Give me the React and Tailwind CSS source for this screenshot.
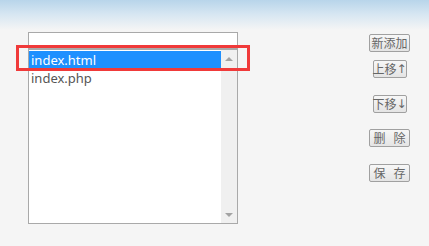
export default function App() {
  const btn = "h-[18px] border border-[#a0a0a0] rounded-[2px] bg-[linear-gradient(#f7f7f7,#e4e4e4)] leading-[16px] whitespace-pre p-0 flex items-center justify-center";
  return (
    <div className="relative w-[429px] h-[246px] overflow-hidden bg-[linear-gradient(to_bottom,#b8d5ea_0px,#d6e6f2_14px,#f5f5f5_30px)] font-['Noto_Sans','Noto_Sans_CJK_SC',sans-serif]">
      <div className="flex pt-[32px] pl-[28px]">
        <div className="w-[210px] h-[192px] border border-[#a9a9a9] bg-white flex flex-col">
          <div className="h-[17px] shrink-0 border-b-2 border-[#a9a9a9]"></div>
          <div className="flex flex-1">
            <div className="flex-1 pt-[1px]">
              <div className="h-[17px] bg-[#1e90ff] text-white text-[13px] leading-[18px] pl-[2px]">index.html</div>
              <div className="h-[18px] text-[#555] text-[13px] leading-[20px] pl-[2px]">index.php</div>
            </div>
            <div className="w-[16px] bg-[#f0f0f0] flex flex-col items-center justify-between pt-[7px] pb-[6px]">
              <div className="w-0 h-0 border-l-[4px] border-r-[4px] border-b-[4px] border-l-transparent border-r-transparent border-b-[#a3a3a3]"></div>
              <div className="w-0 h-0 border-l-[4px] border-r-[4px] border-t-[4px] border-l-transparent border-r-transparent border-t-[#a3a3a3]"></div>
            </div>
          </div>
        </div>
        <div className="ml-[131px] w-[41px] flex flex-col items-center pt-[2px] font-['Noto_Sans_CJK_SC',sans-serif] text-[12px] text-[#666]">
          <button className={btn + " w-[41px]"}>新添加</button>
          <button className={btn + " mt-[8px] w-[34px]"}>上移<span className="font-['DejaVu_Sans',sans-serif] text-[12px]">↑</span></button>
          <button className={btn + " mt-[17px] w-[34px]"}>下移<span className="font-['DejaVu_Sans',sans-serif] text-[12px]">↓</span></button>
          <button className={btn + " mt-[16px] w-[41px]"}>删   除</button>
          <button className={btn + " mt-[17px] w-[41px]"}>保   存</button>
        </div>
      </div>
      <div className="absolute left-[16px] top-[45px] w-[234px] h-[26px] border-[3px] border-[#f03a3a]"></div>
    </div>
  );
}
